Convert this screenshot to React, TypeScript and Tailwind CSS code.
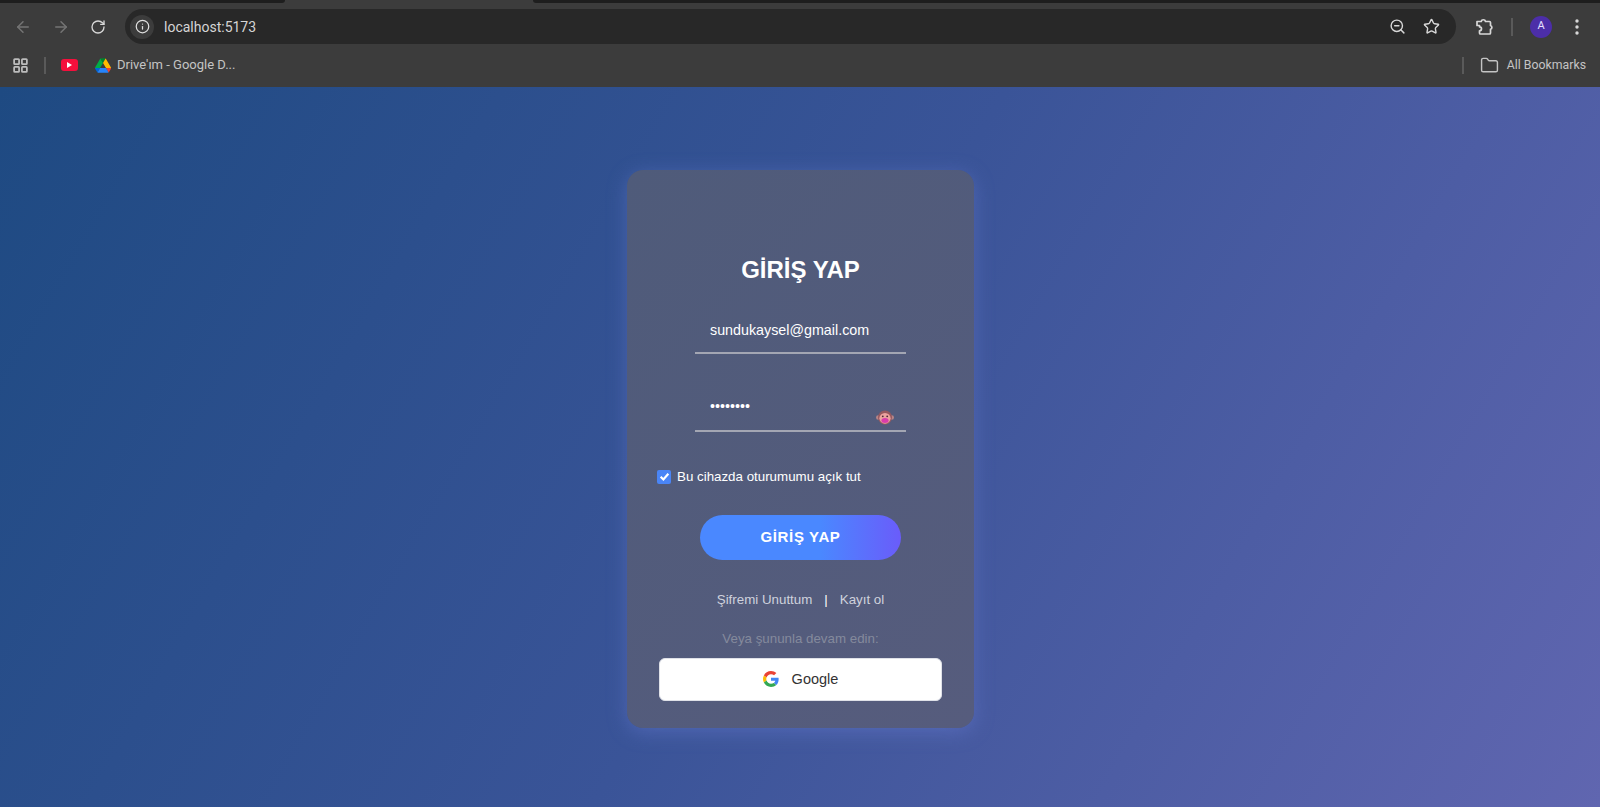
import React from "react";
import { ArrowLeft, ArrowRight, RotateCw, Info, ZoomOut, Star, LayoutGrid, Folder } from "lucide-react";

function GoogleG() {
  return (
    <svg width="16" height="16" viewBox="0 0 48 48">
      <path fill="#EA4335" d="M24 9.5c3.5 0 6.7 1.2 9.2 3.6l6.9-6.9C35.900 2.400 30.500 0 24 0 14.600 0 6.500 5.400 2.600 13.200l8 6.200C12.500 13.700 17.800 9.500 24 9.500z" />
      <path fill="#4285F4" d="M46.900 24.500c0-1.600-.1-3.100-.4-4.500H24v9h12.900c-.6 3-2.200 5.500-4.700 7.200l7.700 6c4.500-4.200 7-10.300 7-17.700z" />
      <path fill="#FBBC05" d="M10.600 28.600c-.5-1.400-.8-3-.8-4.600s.3-3.200.8-4.600l-8-6.200C.9 16.500 0 20.100 0 24s.9 7.500 2.600 10.800l8-6.200z" />
      <path fill="#34A853" d="M24 48c6.500 0 11.900-2.100 15.900-5.800l-7.700-6c-2.200 1.400-4.900 2.300-8.200 2.300-6.200 0-11.500-4.200-13.400-9.900l-8 6.200C6.500 42.600 14.600 48 24 48z" />
    </svg>
  );
}

function DriveIcon() {
  return (
    <svg width="16" height="15" viewBox="0 0 87 78">
      <path fill="#0066DA" d="M6.600 66.850l3.850 6.650c.8 1.400 1.950 2.500 3.300 3.300L27.500 53H0c0 1.550.4 3.100 1.200 4.500z" />
      <path fill="#00AC47" d="M43.650 25L29.900 1.200c-1.350.8-2.500 1.900-3.300 3.300L1.200 48.500C.4 49.900 0 51.450 0 53h27.500z" />
      <path fill="#EA4335" d="M73.550 76.800c1.350-.8 2.500-1.900 3.300-3.300l1.600-2.750 7.650-13.250c.8-1.400 1.200-2.950 1.200-4.500H59.800l5.850 11.500z" />
      <path fill="#00832D" d="M43.650 25L57.400 1.200C56.050.4 54.500 0 52.900 0H34.400c-1.600 0-3.150.45-4.500 1.200z" />
      <path fill="#2684FC" d="M59.800 53H27.500L13.750 76.800c1.350.8 2.900 1.200 4.500 1.200h50.800c1.600 0 3.150-.45 4.500-1.200z" />
      <path fill="#FFBA00" d="M73.400 26.500L60.700 4.500c-.8-1.400-1.950-2.500-3.300-3.300L43.650 25 59.800 53h27.450c0-1.550-.4-3.100-1.200-4.500z" />
    </svg>
  );
}

function ExtensionIcon() {
  return (
    <svg width="18" height="18" viewBox="0 0 18 18" fill="none" stroke="#d8d8d8" strokeWidth="1.700" strokeLinejoin="round">
      <path d="M2 3.500h4.200a2.200 2.200 0 0 1 4.300 0H14.500a1 1 0 0 1 1 1v3a2 2 0 0 1 0 3.800v3.700a1 1 0 0 1-1 1H5.500a1 1 0 0 1-1-1v-2.200a2 2 0 0 0 0-4V7.500L2 7.500z" />
    </svg>
  );
}

function Dots() {
  return (
    <svg width="4" height="16" viewBox="0 0 4 16" fill="#d8d8d8">
      <circle cx="2" cy="2" r="1.700" />
      <circle cx="2" cy="8" r="1.700" />
      <circle cx="2" cy="14" r="1.700" />
    </svg>
  );
}

function Monkey() {
  return (
    <svg width="18" height="15" viewBox="0 0 18 15">
      <circle cx="2.300" cy="7.500" r="2.300" fill="#b98587" />
      <circle cx="15.700" cy="7.500" r="2.300" fill="#b98587" />
      <circle cx="9" cy="7.500" r="7" fill="#96595f" />
      <ellipse cx="9" cy="8.300" rx="5.600" ry="5.400" fill="#eba39f" />
      <circle cx="6.800" cy="6.300" r=".9" fill="#4a2a35" />
      <circle cx="11.200" cy="6.300" r=".9" fill="#4a2a35" />
      <ellipse cx="9" cy="10.500" rx="3.600" ry="2.500" fill="#d93cab" />
    </svg>
  );
}

export default function App() {
  return (
    <div className="flex h-[807px] w-[1600px] flex-col overflow-hidden font-['Liberation_Sans',Arial,sans-serif]">
      {/* Browser chrome */}
      <div className="h-[87px] shrink-0 bg-[#3c3c3c] font-['Roboto',sans-serif]">
        <div className="flex h-[9px]">
          <div className="h-[3px] w-[285px] rounded-br-lg bg-[#1e1e1e]" />
          <div className="h-[3px] w-[248px]" />
          <div className="h-[3px] flex-1 rounded-bl-lg bg-[#1e1e1e]" />
        </div>
        <div className="flex h-[35px] items-center">
          <div className="flex w-[125px] items-center pl-[14px]">
            <ArrowLeft size={18} strokeWidth={2} className="text-[#747474]" />
            <ArrowRight size={18} strokeWidth={2} className="ml-[20px] text-[#747474]" />
            <RotateCw size={16} strokeWidth={2} className="ml-[20px] text-[#d8d8d8]" />
          </div>
          <div className="flex h-[35px] w-[1331px] items-center rounded-full bg-[#282828] pl-[5px] pr-[16px]">
            <div className="flex h-[24px] w-[24px] items-center justify-center rounded-full bg-[#3c3c3c]">
              <Info size={15} strokeWidth={2} className="text-[#e0e0e0]" />
            </div>
            <span className="ml-[10px] pt-[2px] text-[14px] text-[#d5d5d5]">localhost:5173</span>
            <ZoomOut size={17} strokeWidth={2} className="ml-auto text-[#d8d8d8]" />
            <Star size={17} strokeWidth={2} className="ml-[17px] text-[#d8d8d8]" />
          </div>
          <div className="ml-[19px]"><ExtensionIcon /></div>
          <div className="ml-[18px] h-[18px] w-[2px] bg-[#5a5a5a]" />
          <div className="ml-[17px] flex h-[22px] w-[22px] items-center justify-center rounded-full bg-[#4c2ea8] text-[11px] text-[#e6e0ff]">A</div>
          <div className="ml-[23px]"><Dots /></div>
        </div>
        <div className="flex h-[42px] items-center pl-[12px] pr-[14px] text-[13px] text-[#c4c4c4]">
          <LayoutGrid size={17} strokeWidth={2.500} className="text-[#bcbcbc]" />
          <div className="ml-[15px] h-[17px] w-[2px] bg-[#5a5a5a]" />
          <div className="ml-[15px] flex h-[12px] w-[17px] items-center justify-center rounded-[3px] bg-[#f50f3c]">
            <div className="h-0 w-0 border-y-[3px] border-l-[5px] border-y-transparent border-l-white" />
          </div>
          <div className="ml-[17px]"><DriveIcon /></div>
          <span className="ml-[6px]">Drive'ım - Google D...</span>
          <div className="ml-auto h-[17px] w-[2px] bg-[#5a5a5a]" />
          <Folder size={19} strokeWidth={1.800} className="ml-[16px] text-[#c4c4c4]" />
          <span className="ml-[8px] text-[12.300px]">All Bookmarks</span>
        </div>
      </div>

      {/* Page */}
      <div className="flex flex-1 items-start justify-center bg-[linear-gradient(120deg,#1e4a82_0%,#3a5498_50%,#6066b0_100%)] pl-[1px] pt-[83px]">
        <div className="flex h-[558px] w-[347px] flex-col items-center rounded-[16px] bg-[linear-gradient(135deg,#4f5b7a,#565c7d)] px-[32px] pt-[85px] shadow-[0_4px_20px_rgba(110,130,220,0.4)]">
          <h1 className="text-[24px] font-bold leading-[30px] text-white">GİRİŞ YAP</h1>

          <div className="mt-[22px] flex h-[47px] w-[211px] items-center border-b-2 border-[#a3a6b3] pl-[15px] pt-[3px] text-[14.300px] text-white">
            sundukaysel@gmail.com
          </div>

          <div className="relative mt-[31px] flex h-[47px] w-[211px] items-center border-b-2 border-[#a3a6b3] pb-[1px] pl-[15px] text-[14.300px] text-white">
            ••••••••
            <div className="absolute right-[12px] top-[25px]"><Monkey /></div>
          </div>

          <label className="mt-[35px] flex w-full items-center self-start text-[13.330px] text-white">
            <span className="ml-[-2px] flex h-[14px] w-[14px] items-center justify-center rounded-[2px] bg-[#4a85f6]">
              <svg width="11" height="11" viewBox="0 0 10 10"><path d="M1.500 5.200 4 7.700 8.500 2.500" fill="none" stroke="white" strokeWidth="2" /></svg>
            </span>
            <span className="ml-[6px]">Bu cihazda oturumumu açık tut</span>
          </label>

          <button className="mt-[28px] h-[45px] w-[201px] rounded-full bg-[linear-gradient(90deg,#4a88ff_0%,#4a88ff_60%,#6a5cfa_100%)] text-[15px] font-bold tracking-[0.650px] text-white">
            GİRİŞ YAP
          </button>

          <div className="mt-[32px] flex h-[16px] items-center text-[13.330px] text-[#cfd2dc]">
            <span>Şifremi Unuttum</span>
            <span className="mx-[12px] text-white">|</span>
            <span>Kayıt ol</span>
          </div>

          <div className="mt-[23px] text-[13.330px] leading-[16px] text-[#848a9c]">Veya şununla devam edin:</div>

          <button className="mt-[11px] flex h-[43px] w-[283px] shrink-0 items-center justify-center gap-[13px] rounded-[6px] border border-[#dfe1e8] bg-white text-[14.500px] text-[#333333]">
            <GoogleG />
            Google
          </button>
        </div>
      </div>
    </div>
  );
}
